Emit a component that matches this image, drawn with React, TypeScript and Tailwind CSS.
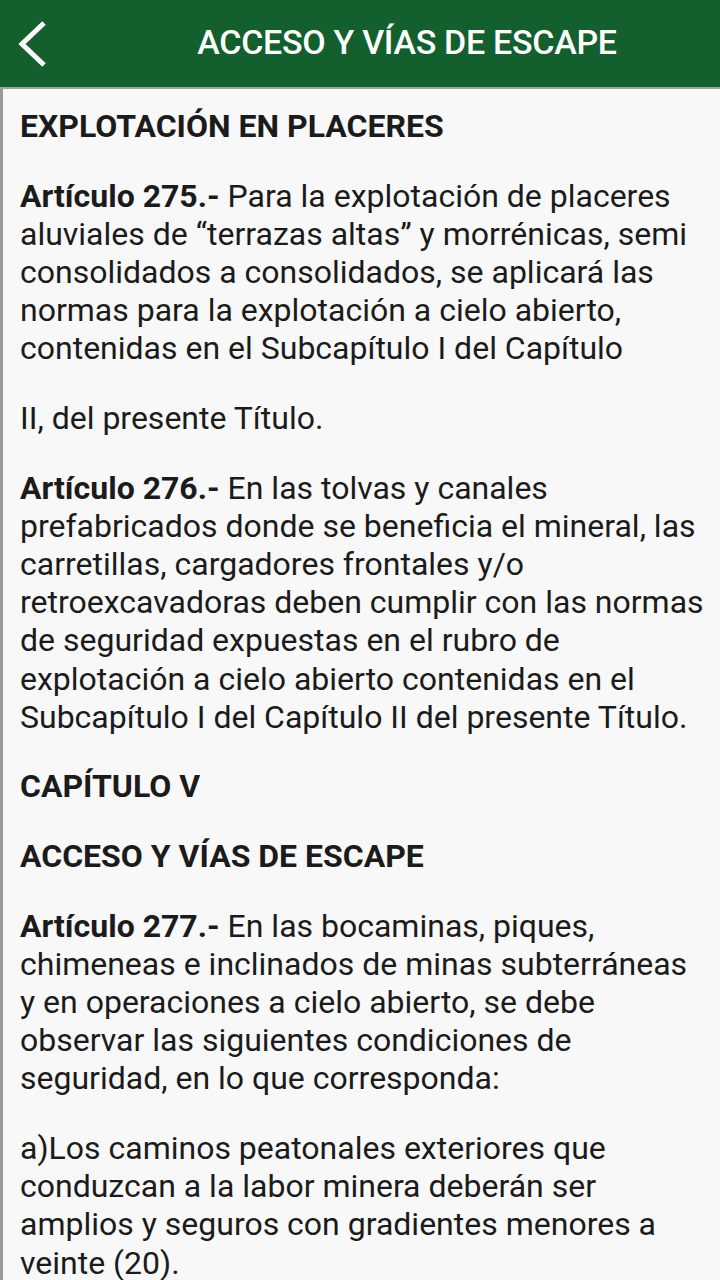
import * as React from "react";

const paragraphs: { bold?: string; text?: string; heading?: boolean }[] = [
  { bold: "EXPLOTACIÓN EN PLACERES", heading: true },
  {
    bold: "Artículo 275.-",
    text: " Para la explotación de placeres aluviales de “terrazas altas” y morrénicas, semi consolidados a consolidados, se aplicará las normas para la explotación a cielo abierto, contenidas en el Subcapítulo I del Capítulo",
  },
  { text: "II, del presente Título." },
  {
    bold: "Artículo 276.-",
    text: " En las tolvas y canales prefabricados donde se beneficia el mineral, las carretillas, cargadores frontales y/o retroexcavadoras deben cumplir con las normas de seguridad expuestas en el rubro de explotación a cielo abierto contenidas en el Subcapítulo I del Capítulo II del presente Título.",
  },
  { bold: "CAPÍTULO V", heading: true },
  { bold: "ACCESO Y VÍAS DE ESCAPE", heading: true },
  {
    bold: "Artículo 277.-",
    text: " En las bocaminas, piques, chimeneas e inclinados de minas subterráneas y en operaciones a cielo abierto, se debe observar las siguientes condiciones de seguridad, en lo que corresponda:",
  },
  {
    text: "a)Los caminos peatonales exteriores que conduzcan a la labor minera deberán ser amplios y seguros con gradientes menores a veinte (20).",
  },
];

export default function App() {
  return (
    <div className="h-screen overflow-hidden bg-[#f8f8f8] font-['Roboto',sans-serif]">
      {/* Header */}
      <div className="relative flex h-[87px] items-center justify-center bg-[#135f2e]">
        <button className="absolute left-[14px] top-[20px] flex h-[48px] w-[36px] items-center justify-center">
          <svg width="30" height="46" viewBox="0 0 30 46" fill="none">
            <path d="M27 2 L5 23 L27 44" stroke="white" strokeWidth="5" strokeLinecap="butt" strokeLinejoin="miter" />
          </svg>
        </button>
        <h1 className="ml-[94px] -mt-[3px] text-[34px] font-medium tracking-[-0.3px] text-white">
          ACCESO Y VÍAS DE ESCAPE
        </h1>
      </div>
      <div className="h-[2px] bg-[#a3a3a3]" />

      {/* Content */}
      <div className="h-[1191px] overflow-hidden border-l-[3px] border-[#9a9a9a] pl-[17px] pr-[10px] pt-[18px]">
        {paragraphs.map((p, i) => (
          <p
            key={i}
            className="mb-[31.5px] text-[32px] leading-[38.17px] text-[#1b1b1b]"
          >
            {p.bold && <span className="font-bold">{p.bold}</span>}
            {p.text}
          </p>
        ))}
      </div>
    </div>
  );
}
